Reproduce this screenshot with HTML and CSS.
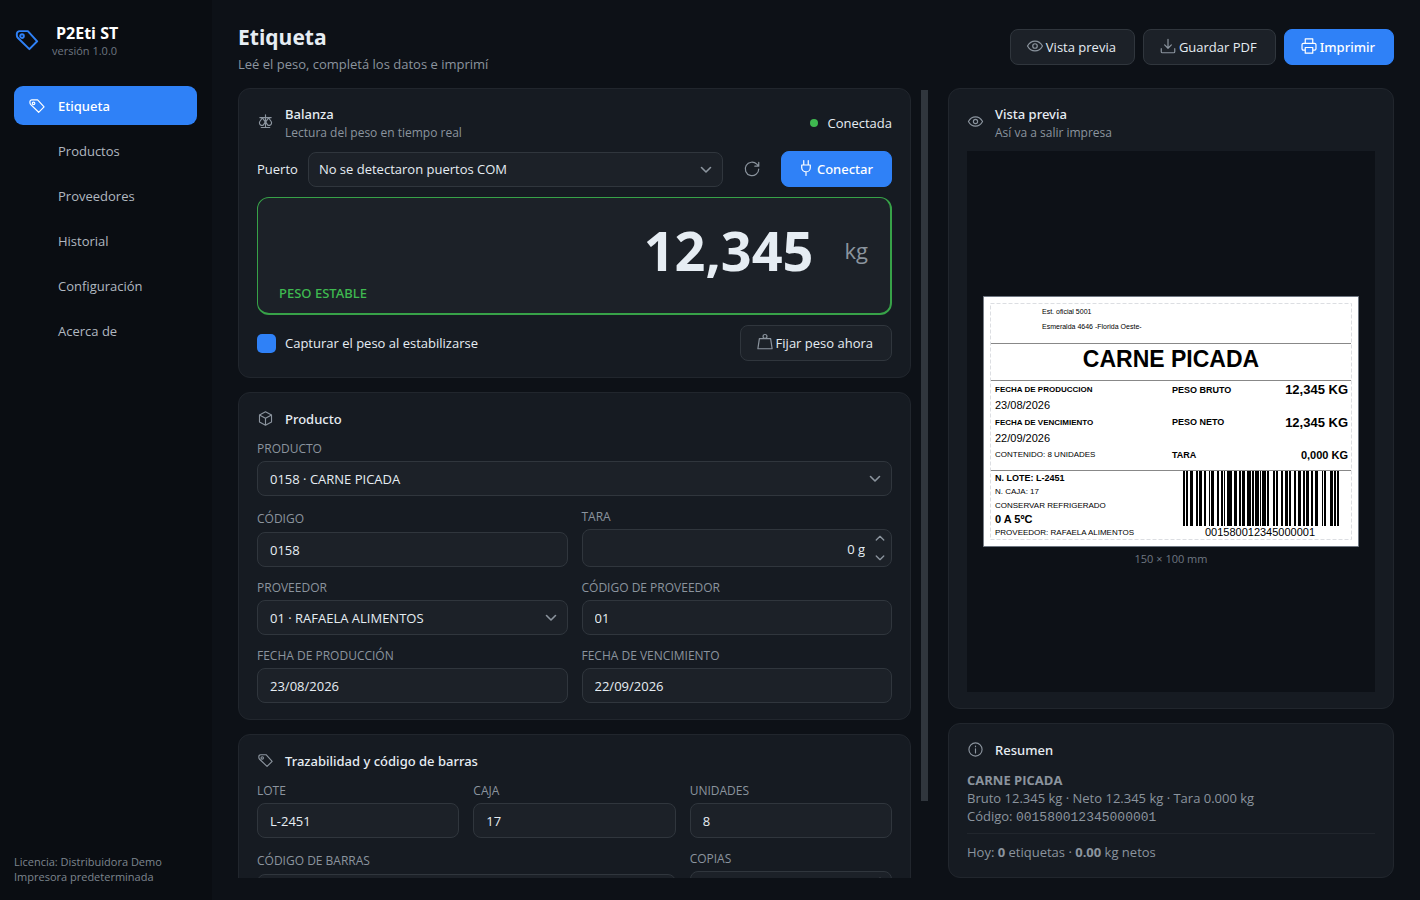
FILE: index.html
```html
<!DOCTYPE html>
<html lang="es">
<head>
<meta charset="utf-8">
<title>P2Eti ST</title>
<link rel="stylesheet" href="styles.css">
</head>
<body>
<svg class="defs" aria-hidden="true">
  <symbol id="tag" viewBox="0 0 24 24"><path d="M12.8 3.8H5.2a2.6 2.6 0 0 0-2.6 2.6v1.2c0 1 .4 1.9 1.1 2.6L14.2 20.4l7.2-7.2z"/><circle cx="7.4" cy="8.4" r="1.7"/></symbol>
  <symbol id="eye" viewBox="0 0 24 24"><path d="M2 12s3.6-6.6 10-6.6S22 12 22 12s-3.6 6.6-10 6.6S2 12 2 12z"/><circle cx="12" cy="12" r="3"/></symbol>
  <symbol id="save" viewBox="0 0 24 24"><path d="M12 3v12M7.5 10.5 12 15l4.500-4.500M3 15.500v4a1.500 1.500 0 0 0 1.500 1.500h15a1.500 1.500 0 0 0 1.500-1.500v-4"/></symbol>
  <symbol id="print" viewBox="0 0 24 24"><path d="M7 8.500V2.500h10v6M7 17.500H4.500A1.800 1.800 0 0 1 2.700 15.700v-5.400a1.800 1.800 0 0 1 1.800-1.800h15a1.800 1.800 0 0 1 1.800 1.800v5.400a1.800 1.800 0 0 1-1.800 1.800H17M7 14h10v7.500H7z"/></symbol>
  <symbol id="scale" viewBox="0 0 24 24"><path d="M12 2.500v18M4 6.500h16M7.500 7 4 12a3.700 3.700 0 0 0 2 5.500h2.500L11 14c.4-1 .3-2-.3-3zM16.500 7l3.500 5a3.700 3.700 0 0 1-2 5.500h-2.500L13 14c-.4-1-.3-2 .3-3zM6 20.500h12"/></symbol>
  <symbol id="refresh" viewBox="0 0 24 24"><path d="M21 12a9 9 0 1 1-2.600-6.400L21 8.200M21 3v5.200h-5.200"/></symbol>
  <symbol id="plug" viewBox="0 0 24 24"><path d="M9 2v6M15 2v6M6.300 8h11.400v3.500a5.700 5.700 0 0 1-11.400 0zM12 17.200V22"/></symbol>
  <symbol id="weight" viewBox="0 0 24 24"><circle cx="12" cy="4.600" r="2.600"/><path d="M4.500 7.500h15l2 13.500h-19z"/></symbol>
  <symbol id="box" viewBox="0 0 24 24"><path d="M12 2.500 20.500 7v10L12 21.500 3.500 17V7zM3.500 7l8.500 4.700L20.500 7M12 11.700v9.800"/></symbol>
  <symbol id="info" viewBox="0 0 24 24"><circle cx="12" cy="12" r="9.300"/><path d="M12 11v6M12 7v1"/></symbol>
  <symbol id="down" viewBox="0 0 12 12"><path d="M1.500 3.500 6 8l4.500-4.500"/></symbol>
  <symbol id="up" viewBox="0 0 12 12"><path d="M1.500 8.500 6 4l4.500 4.500"/></symbol>
</svg>
<div class="app">
  <aside class="sidebar">
    <div class="brand">
      <svg class="brand-icon"><use href="#tag"/></svg>
      <div>
        <div class="brand-name">P2Eti ST</div>
        <div class="brand-version">versión 1.0.0</div>
      </div>
    </div>
    <nav class="nav">
      <a class="nav-item active" href="#etiqueta"><svg class="icon"><use href="#tag"/></svg>Etiqueta</a>
      <a class="nav-item" href="#productos">Productos</a>
      <a class="nav-item" href="#proveedores">Proveedores</a>
      <a class="nav-item" href="#historial">Historial</a>
      <a class="nav-item" href="#configuracion">Configuración</a>
      <a class="nav-item" href="#acerca">Acerca de</a>
    </nav>
    <div class="license">Licencia: Distribuidora Demo<br>Impresora predeterminada</div>
  </aside>
  <main class="main">
    <header class="page-head">
      <div>
        <h1>Etiqueta</h1>
        <p class="lead">Leé el peso, completá los datos e imprimí</p>
      </div>
      <div class="actions">
        <button class="btn" type="button"><svg class="icon"><use href="#eye"/></svg>Vista previa</button>
        <button class="btn" type="button"><svg class="icon"><use href="#save"/></svg>Guardar PDF</button>
        <button class="btn primary" type="button"><svg class="icon"><use href="#print"/></svg>Imprimir</button>
      </div>
    </header>
    <div class="columns">
      <div class="scroll-area">
        <div class="stack">
          <section class="card">
            <div class="card-head">
              <svg class="icon"><use href="#scale"/></svg>
              <div class="card-titles"><h2>Balanza</h2><p>Lectura del peso en tiempo real</p></div>
              <div class="state"><span class="dot"></span>Conectada</div>
            </div>
            <div class="row">
              <label for="puerto">Puerto</label>
              <div class="control port"><select id="puerto"><option>No se detectaron puertos COM</option></select><svg class="chev"><use href="#down"/></svg></div>
              <button class="refresh" type="button" aria-label="Actualizar puertos"><svg class="icon"><use href="#refresh"/></svg></button>
              <button class="btn primary" type="button"><svg class="icon"><use href="#plug"/></svg>Conectar</button>
            </div>
            <div class="weight">
              <div class="reading"><span class="digits">12,345</span><span class="unit">kg</span></div>
              <div class="stable">PESO ESTABLE</div>
            </div>
            <div class="row between">
              <label class="check"><input type="checkbox" checked>Capturar el peso al estabilizarse</label>
              <button class="btn" type="button"><svg class="icon"><use href="#weight"/></svg>Fijar peso ahora</button>
            </div>
          </section>
          <section class="card">
            <div class="card-head"><svg class="icon"><use href="#box"/></svg><h2>Producto</h2></div>
            <div class="fields two">
              <div class="field wide"><label for="producto">PRODUCTO</label><div class="control"><select id="producto"><option>0158 · CARNE PICADA</option></select><svg class="chev"><use href="#down"/></svg></div></div>
              <div class="field"><label for="codigo">CÓDIGO</label><input id="codigo" type="text" value="0158"></div>
              <div class="field"><label for="tara">TARA</label><div class="control spin"><input id="tara" type="text" value="0 g"><div class="steps"><button type="button" aria-label="Aumentar tara"><svg><use href="#up"/></svg></button><button type="button" aria-label="Reducir tara"><svg><use href="#down"/></svg></button></div></div></div>
              <div class="field"><label for="proveedor">PROVEEDOR</label><div class="control"><select id="proveedor"><option>01 · RAFAELA ALIMENTOS</option></select><svg class="chev"><use href="#down"/></svg></div></div>
              <div class="field"><label for="codprov">CÓDIGO DE PROVEEDOR</label><input id="codprov" type="text" value="01"></div>
              <div class="field"><label for="fprod">FECHA DE PRODUCCIÓN</label><input id="fprod" type="text" value="23/08/2026"></div>
              <div class="field"><label for="fvenc">FECHA DE VENCIMIENTO</label><input id="fvenc" type="text" value="22/09/2026"></div>
            </div>
          </section>
          <section class="card">
            <div class="card-head"><svg class="icon"><use href="#tag"/></svg><h2>Trazabilidad y código de barras</h2></div>
            <div class="fields three">
              <div class="field"><label for="lote">LOTE</label><input id="lote" type="text" value="L-2451"></div>
              <div class="field"><label for="caja">CAJA</label><input id="caja" type="text" value="17"></div>
              <div class="field"><label for="unidades">UNIDADES</label><input id="unidades" type="text" value="8"></div>
              <div class="field span-two"><label for="barras">CÓDIGO DE BARRAS</label><input id="barras" type="text"></div>
              <div class="field"><label for="copias">COPIAS</label><div class="control spin"><input id="copias" type="text"><div class="steps"><button type="button" aria-label="Aumentar copias"><svg><use href="#up"/></svg></button><button type="button" aria-label="Reducir copias"><svg><use href="#down"/></svg></button></div></div></div>
            </div>
          </section>
        </div>
        <div class="scrollbar"></div>
      </div>
      <div class="side">
        <section class="card preview">
          <div class="card-head">
            <svg class="icon"><use href="#eye"/></svg>
            <div class="card-titles"><h2>Vista previa</h2><p>Así va a salir impresa</p></div>
          </div>
          <div class="canvas">
            <svg class="label" viewBox="0 0 376 251">
              <rect class="paper" x="0.500" y="0.500" width="375" height="250"/>
              <rect class="margin" x="7.500" y="7.500" width="361" height="236"/>
              <path class="rule" d="M8 47.500h360M8 84.500h360M8 174.500h360"/>
              <text class="s7" x="59" y="18">Est. oficial 5001</text>
              <text class="s7" x="59" y="33">Esmeralda 4646 -Florida Oeste-</text>
              <text class="s23 b mid" x="188" y="71">CARNE PICADA</text>
              <text class="s8 b" x="12" y="96">FECHA DE PRODUCCION</text>
              <text class="s11" x="12" y="113">23/08/2026</text>
              <text class="s8 b" x="12" y="129">FECHA DE VENCIMIENTO</text>
              <text class="s11" x="12" y="146">22/09/2026</text>
              <text class="s8" x="12" y="161">CONTENIDO: 8 UNIDADES</text>
              <text class="s9 b" x="189" y="97">PESO BRUTO</text>
              <text class="s9 b" x="189" y="129">PESO NETO</text>
              <text class="s9 b" x="189" y="162">TARA</text>
              <text class="s13 b end" x="365" y="98">12,345 KG</text>
              <text class="s13 b end" x="365" y="131">12,345 KG</text>
              <text class="s11 b end" x="365" y="163">0,000 KG</text>
              <text class="s9 b" x="12" y="185">N. LOTE: L-2451</text>
              <text class="s8" x="12" y="198">N. CAJA: 17</text>
              <text class="s8" x="12" y="212">CONSERVAR REFRIGERADO</text>
              <text class="s11 b" x="12" y="227">0 A 5ºC</text>
              <text class="s8" x="12" y="239">PROVEEDOR: RAFAELA ALIMENTOS</text>
              <svg x="200" y="175" width="156" height="55" viewBox="0 0 134 1" preserveAspectRatio="none">
                <path class="bars" d="M0 .5H134" stroke-dasharray="2 1 1 2 3 2 2 1 2 2 2 2 1 1 3 2 2 2 1 1 1 2 4 2 2 2 2 1 2 2 3 1 2 1 3 1 1 1 3 1 2 3 2 1 2 2 2 2 2 1 2 2 2 2 2 2 2 1 2 2 2 1 3 3 1 1 2 3 3 1 1 1 2"/>
              </svg>
              <text class="s11 mid" x="277" y="240">001580012345000001</text>
            </svg>
            <div class="size">150 × 100 mm</div>
          </div>
        </section>
        <section class="card">
          <div class="card-head"><svg class="icon"><use href="#info"/></svg><h2>Resumen</h2></div>
          <div class="summary">
            <div><strong>CARNE PICADA</strong></div>
            <div>Bruto 12.345 kg · Neto 12.345 kg · Tara 0.000 kg</div>
            <div>Código: <code>001580012345000001</code></div>
          </div>
          <div class="today">Hoy: <strong>0</strong> etiquetas · <strong>0.00</strong> kg netos</div>
        </section>
      </div>
    </div>
  </main>
</div>
</body>
</html>
```
FILE: styles.css
```css
* { box-sizing: border-box; }

body {
  margin: 0;
  background: #0d1117;
  color: #e6edf3;
  font: 13px/18px "Open Sans", "Noto Sans", sans-serif;
}

h1, h2, p { margin: 0; }

svg {
  fill: none;
  stroke: currentColor;
  stroke-width: 1.6;
  stroke-linecap: round;
  stroke-linejoin: round;
}

button, input, select { font: inherit; color: inherit; margin: 0; }

.defs { display: none; }

.icon { width: 18px; height: 18px; flex: none; color: #8b949e; }

.app { display: flex; height: 100vh; }

/* Sidebar */
.sidebar {
  display: flex;
  flex-direction: column;
  flex: none;
  width: 212px;
  padding: 24px 15px 16px 14px;
  background: #0a0d12;
}

.brand { display: flex; align-items: center; gap: 12px; height: 34px; }
.brand-icon { width: 26px; height: 26px; margin-bottom: 2px; color: #2f81f7; stroke-width: 1.8; }
.brand-name { padding-left: 4px; font-size: 16px; line-height: 18px; font-weight: 700; color: #fff; }
.brand-version { font-size: 11px; line-height: 17px; color: #6e7681; }

.nav { display: flex; flex-direction: column; gap: 6px; margin-top: 28px; }

.nav-item {
  display: flex;
  align-items: center;
  height: 39px;
  padding-left: 44px;
  border-radius: 9px;
  color: #b1b8c0;
  text-decoration: none;
}

.nav-item.active {
  gap: 12px;
  padding-left: 14px;
  background: #2f81f7;
  color: #fff;
  font-family: "Noto Sans", sans-serif;
  font-weight: 500;
}
.nav-item.active .icon { color: #fff; }

.license { margin-top: auto; font-size: 11px; line-height: 15px; color: #7d858e; }

/* Page */
.main {
  display: flex;
  flex-direction: column;
  flex: 1;
  min-width: 0;
  padding: 22px 26px;
}

.page-head { display: flex; justify-content: space-between; align-items: flex-start; margin-bottom: 13px; }
.page-head h1 { font-size: 21px; line-height: 31px; font-weight: 700; }
.lead { line-height: 22px; color: #8b949e; }
.actions { display: flex; gap: 8px; padding-top: 7px; }

.btn {
  display: flex;
  align-items: center;
  gap: 2px;
  height: 36px;
  padding: 0 18px 0 15px;
  border: 1px solid #30363d;
  border-radius: 8px;
  background: #1c2128;
}

.btn .icon { margin-bottom: 3px; }
.btn.primary {
  border-color: #2f81f7;
  background: #2f81f7;
  color: #fff;
  font-family: "Noto Sans", sans-serif;
  font-weight: 500;
}
.btn.primary .icon { color: #fff; }

.columns {
  display: grid;
  grid-template-columns: minmax(0, 690fr) minmax(0, 446fr);
  gap: 20px;
  flex: 1;
  min-height: 0;
}

.scroll-area { display: flex; gap: 10px; min-height: 0; }
.stack { flex: 1; min-width: 0; overflow: hidden; }
.stack .card + .card { margin-top: 14px; }
.scrollbar { flex: none; width: 7px; height: 90%; margin-top: 2px; background: #30363d; }

.card {
  display: flex;
  flex-direction: column;
  gap: 10px;
  padding: 16px 18px;
  border: 1px solid #21262d;
  border-radius: 12px;
  background: #161b22;
}

.card-head { display: flex; align-items: center; gap: 10px; min-height: 21px; }
.card-head .icon { width: 17px; height: 17px; margin: 0 1px 3px 0; }
.card-titles { flex: 1; }
h2 { font-family: "Noto Sans", sans-serif; font-size: 13px; line-height: 19px; font-weight: 500; }
.card-titles p { font-size: 12px; line-height: 17px; color: #8b949e; }

.state { display: flex; align-items: center; gap: 9px; }
.dot { width: 8px; height: 8px; border-radius: 50%; background: #3fb950; }

.row { display: flex; align-items: center; gap: 10px; min-height: 36px; }
.between { justify-content: space-between; }

.refresh {
  display: flex;
  align-items: center;
  justify-content: center;
  width: 38px;
  height: 36px;
  padding: 0;
  border: 0;
  background: none;
}

.control { position: relative; }
.port { flex: 1; }

input[type="text"], select {
  display: block;
  width: 100%;
  height: 35px;
  padding: 0 12px;
  border: 1px solid #30363d;
  border-radius: 8px;
  background: #1c2128;
  appearance: none;
}

.port select { padding-left: 10px; }

.chev {
  position: absolute;
  right: 11px;
  top: 12px;
  width: 12px;
  height: 12px;
  color: #8b949e;
  pointer-events: none;
}

.spin input[type="text"] { height: 38px; padding: 2px 26px 0 12px; text-align: right; }
.steps { position: absolute; right: 6px; top: 4px; bottom: 4px; display: flex; flex-direction: column; justify-content: space-between; }
.steps button { width: 12px; height: 10px; padding: 0; border: 0; background: none; color: #8b949e; }
.steps svg { display: block; width: 10px; height: 10px; margin: auto; }

.weight {
  display: flex;
  flex-direction: column;
  height: 118px;
  padding: 18px 22px 11px 21px;
  border: 1px solid #37a248;
  border-right-width: 2px;
  border-bottom-width: 2px;
  border-radius: 12px;
  background: #1c2128;
}

.reading { display: flex; flex: 1; align-items: center; justify-content: flex-end; gap: 31px; }
.digits { font-size: 54px; line-height: 68px; font-weight: 700; }
.unit { font-size: 22px; line-height: 30px; color: #8b949e; }
.stable { color: #3fb950; font-family: "Noto Sans", sans-serif; font-weight: 500; }

.check { display: flex; align-items: center; gap: 9px; }
.check input { appearance: none; width: 19px; height: 19px; border-radius: 5px; background: #2f81f7; }

.fields { display: grid; gap: 12px 14px; }
.two { grid-template-columns: repeat(2, minmax(0, 1fr)); }
.three { grid-template-columns: repeat(3, minmax(0, 1fr)); }
.wide, .span-two { grid-column: span 2; }
.field { display: flex; flex-direction: column; gap: 4px; }
.field label { display: flex; flex: 1; align-items: center; font-size: 12px; line-height: 17px; color: #8b949e; }

/* Right column */
.side { display: flex; flex-direction: column; gap: 14px; min-height: 0; }
.preview { flex: 1; min-height: 0; }

.canvas {
  display: grid;
  grid-template-rows: 1fr auto 1fr;
  flex: 1;
  min-height: 0;
  padding: 0 16px;
  background: #0d1117;
}

.label {
  grid-row: 2;
  width: 100%;
  fill: #000;
  stroke: none;
  font-family: "Liberation Sans", Arial, sans-serif;
}

.paper { fill: #fff; stroke: #6e7681; stroke-width: 1; }
.margin { fill: none; stroke: #dcdee2; stroke-width: 1; stroke-dasharray: 4 2; stroke-linecap: butt; }
.rule { stroke: #888; stroke-width: 1; stroke-linecap: butt; }
.bars { stroke: #000; stroke-width: 1; stroke-linecap: butt; shape-rendering: crispEdges; }
.s7 { font-size: 7px; }
.s8 { font-size: 8px; }
.s9 { font-size: 9px; }
.s11 { font-size: 11px; }
.s13 { font-size: 13px; }
.s23 { font-size: 23px; }
.b { font-weight: 700; }
.mid { text-anchor: middle; }
.end { text-anchor: end; }

.size { grid-row: 3; padding-top: 4px; font-size: 11px; line-height: 15px; text-align: center; color: #6e7681; }

.summary { padding-bottom: 8px; border-bottom: 1px solid #21262d; line-height: 18px; color: #8b949e; }
.summary code { font-family: "Liberation Mono", monospace; font-size: 13px; line-height: 1; }
.today { line-height: 17px; color: #8b949e; }
```
